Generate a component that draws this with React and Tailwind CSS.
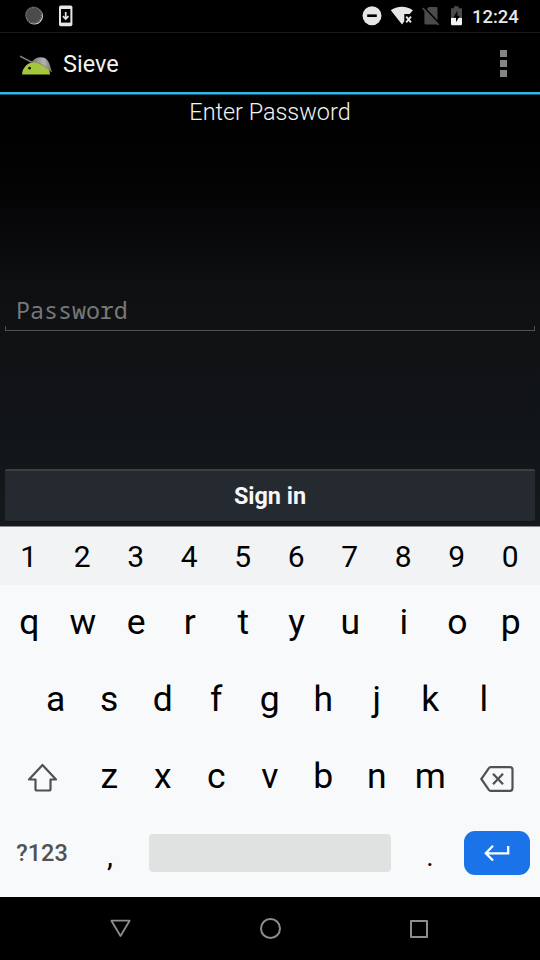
import React from 'react';

function StatusBar() {
  return (
    <div className="flex h-8 items-center bg-black pl-[24px] pr-[21px]">
      <svg width="20" height="20" viewBox="0 0 20 20">
        <circle cx="10.4" cy="10" r="8.6" fill="#dedede" />
        <circle cx="9.7" cy="9.1" r="8.6" fill="#4b4b4b" />
        <circle cx="9.7" cy="9.1" r="7.6" fill="none" stroke="#777" strokeWidth="1.4" strokeDasharray="1 1.6" />
      </svg>
      <svg className="ml-[14px]" width="16" height="22" viewBox="0 0 16 22">
        <rect x="1" y="0.4" width="13.4" height="20.8" rx="1.8" fill="#e6e6e6" />
        <rect x="3" y="4" width="9.4" height="13.6" fill="#000" />
        <path d="M7.7 7v7M4.9 11.2l2.8 2.9 2.8-2.9" fill="none" stroke="#e6e6e6" strokeWidth="1.7" />
      </svg>
      <svg className="ml-auto" width="20" height="20" viewBox="0 0 20 20">
        <circle cx="10" cy="9.7" r="9.5" fill="#e6e6e6" />
        <rect x="5.2" y="8.4" width="9.6" height="2.6" fill="#000" />
      </svg>
      <svg className="ml-[8px]" width="24" height="20" viewBox="0 0 24 20">
        <path d="M.8 4.3C6.7-.4 17-.4 22.9 4.3L19.8 8H14.3V15.3L12 18.4Z" fill="#e6e6e6" />
        <path d="M16.2 10.7l4.8 5.6M21 10.7l-4.8 5.6" stroke="#e6e6e6" strokeWidth="1.9" />
      </svg>
      <svg className="ml-[8px]" width="18" height="20" viewBox="0 0 18 20">
        <path d="M6.8 1h7.3q1.4 0 1.4 1.4V17q0 1.6-1.4 1.6H4Q2.4 18.600 2.400 17V5.600Z" fill="#4b4b4b" />
        <path d="M2 1.400L18 18.400" stroke="#000" strokeWidth="2" />
        <path d="M.7 2.200L16.600 18.800" stroke="#4b4b4b" strokeWidth="1.700" />
      </svg>
      <svg className="ml-[10px]" width="13" height="20" viewBox="0 0 13 20">
        <path d="M4 .2h4.600v2H12v10H1v-10h3Z" fill="#4b4b4b" />
        <path d="M1 12h11v6q0 1.200-1.200 1.200H2.200Q1 19.200 1 18Z" fill="#f2f2f2" />
        <path d="M7.600 4.600L3.300 11.600H6V16.200L9.800 9.800H7.200Z" fill="#000" />
      </svg>
      <span className="ml-[9px] w-[47px] whitespace-nowrap pt-px text-[18.400px] font-medium leading-8 text-[#e8e8e8]">12:24</span>
    </div>
  );
}

function SieveLogo() {
  return (
    <svg className="mt-[5px]" width="34" height="22" viewBox="0 0 34 22">
      <defs>
        <linearGradient id="metal" x1="0" x2="1">
          <stop offset="0" stopColor="#777" />
          <stop offset=".6" stopColor="#b5b5b5" />
          <stop offset="1" stopColor="#747474" />
        </linearGradient>
      </defs>
      <path d="M2 20.500C2.300 13 8.500 7.800 16 7.800S29.700 13 30 20.500Z" fill="#a4c639" />
      <path d="M12 7.500C15 3.800 20 2.400 24 3.800C28.500 5.400 30.200 11 31.700 17.800C27 14.600 22 8 12 7.500Z" fill="url(#metal)" />
      <path d="M0 2.100L11.500 8.200" stroke="#858585" strokeWidth="1.500" />
      <path d="M10.500 7.500C21 8 26.500 14 31.700 17.600" fill="none" stroke="#8b8b76" strokeWidth="1" />
      <circle cx="9.600" cy="14.200" r="1.400" fill="#101405" />
      <circle cx="22.300" cy="14.200" r="1.400" fill="#a9bd88" />
    </svg>
  );
}

function ActionBar() {
  return (
    <header className="flex h-[60px] shrink-0 items-center border-t border-[#191a1a] pl-5 pr-[33px]">
      <SieveLogo />
      <h1 className="ml-[9px] mt-[5px] text-[23.500px] font-normal leading-none text-[#f3f3f3]">Sieve</h1>
      <div className="ml-auto mt-px flex flex-col gap-[3px]">
        <i className="size-[7px] bg-[#858585]" />
        <i className="size-[7px] bg-[#858585]" />
        <i className="size-[7px] bg-[#858585]" />
      </div>
    </header>
  );
}

function LetterRow({ letters, className }) {
  return (
    <div className={'flex h-[77px] items-center pb-px text-[35.500px] ' + className}>
      {letters.split('').map((c) => (
        <span key={c} className="w-[53.500px] text-center">{c}</span>
      ))}
    </div>
  );
}

function Keyboard() {
  return (
    <div className="h-[371px] border-t border-[#8b878d] bg-[#f8f9fb] leading-none text-black">
      <div className="flex h-[58px] items-center bg-[#f1f3f4] pl-[2px] pt-[2px] text-[30px]">
        {'1234567890'.split('').map((c) => (
          <span key={c} className="w-[53.500px] text-center">{c}</span>
        ))}
      </div>
      <LetterRow letters="qwertyuiop" className="pl-[2.500px]" />
      <LetterRow letters="asdfghjkl" className="pl-[29px]" />
      <div className="flex items-center">
        <svg className="ml-[27px]" width="32" height="32" viewBox="0 0 32 32">
          <path d="M15.500 3L29 17.500H23.500V27Q23.500 28.500 22 28.500H10Q8.500 28.500 8.500 27V17.500H2Z" fill="none" stroke="#505153" strokeWidth="2.200" strokeLinejoin="round" />
        </svg>
        <LetterRow letters="zxcvbnm" className="ml-[23.500px]" />
        <svg className="ml-[22px] mt-[3px]" width="36" height="30" viewBox="0 0 36 30">
          <path d="M11.500 3.200H31Q33.500 3.200 33.500 5.700V24.300Q33.500 26.800 31 26.800H11.500Q10.500 26.800 9.700 25.700L2.300 15L9.700 4.300Q10.500 3.200 11.500 3.200Z" fill="none" stroke="#505153" strokeWidth="2.200" />
          <path d="M14 9.800L24 20.200M24 9.800L14 20.200" stroke="#505153" strokeWidth="2.300" />
        </svg>
      </div>
      <div className="flex h-[77px] items-center pb-[3px]">
        <span className="w-[84px] pt-[2px] text-center text-[23.500px] font-medium text-[#505153]">?123</span>
        <span className="w-[52px] pt-[5px] text-center text-[30px]">,</span>
        <div className="ml-[13px] h-[38px] w-[242px] rounded bg-[#e0e2e1]" />
        <span className="ml-[12px] w-[54px] pt-[7px] text-center text-[28px]">.</span>
        <div className="ml-[7px] flex h-[44px] w-[66px] items-center justify-center rounded-[11px] bg-[#1a73e8]">
          <svg width="26" height="18" viewBox="0 0 26 18">
            <path d="M24.200 2V9.300H2M9 1.800L1.800 9.300L9 16.500" fill="none" stroke="#fff" strokeWidth="2.300" />
          </svg>
        </div>
      </div>
    </div>
  );
}

function NavBar() {
  return (
    <nav className="flex h-[63px] items-center bg-black pl-[109px]">
      <svg width="23" height="22" viewBox="0 0 23 22">
        <path d="M2.400 2.700H20.600L11.500 18Z" fill="none" stroke="#8d8d8d" strokeWidth="1.800" strokeLinejoin="round" />
      </svg>
      <div className="ml-[127.500px] size-[21px] rounded-full border-2 border-[#8d8d8d]" />
      <div className="ml-[129.500px] size-[18px] rounded-[1px] border-2 border-[#8d8d8d]" />
    </nav>
  );
}

export default function App() {
  return (
    <main className="flex h-[960px] w-[540px] flex-col overflow-hidden bg-black font-[Roboto,sans-serif]">
      <StatusBar />
      <section className="flex h-[494px] flex-col bg-linear-to-b from-black via-[#0e0f11] to-[#14191c]">
        <ActionBar />
        <div className="h-[3px] shrink-0 border-b border-[#155f7c] bg-[#33b5e5]" />
        <p className="mt-[3px] text-center text-[23.400px] font-light leading-7 text-[#f3f3f3]">Enter Password</p>
        <div className="mx-[5px] mt-[170px] flex h-[35px] shrink-0 flex-col justify-end">
          <div className="pb-[2px] pl-[11px] font-['Noto_Sans_Mono','DejaVu_Sans_Mono',monospace] text-[23.300px] leading-[28px] text-[#777878]">Password</div>
          <div className="h-[5px] border-x border-b border-[#505253]" />
        </div>
        <button className="mx-[5px] mt-[138px] h-[53px] shrink-0 rounded-[2px] border-b border-t-2 border-b-[#101416] border-t-[#3b3f42] bg-[#252a30] pt-[2px] text-[23.400px] font-bold leading-none text-[#f7f7f7]">Sign in</button>
      </section>
      <Keyboard />
      <NavBar />
    </main>
  );
}
